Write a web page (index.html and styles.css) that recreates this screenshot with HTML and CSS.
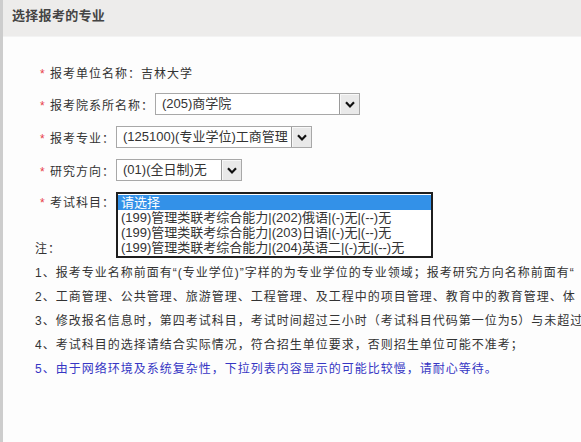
FILE: index.html
```html
<!DOCTYPE html>
<html lang="zh-CN">
<head>
  <meta charset="UTF-8" />
  <title>选择报考的专业</title>
  <link rel="stylesheet" href="styles.css">
</head>
<body>
  <div class="page">
    <div class="panel-head">选择报考的专业</div>

    <div class="panel-body">
      <div class="form">
        <div class="row row-plain">
          <span class="req">*</span>报考单位名称：吉林大学
        </div>

        <div class="row">
          <label><span class="req">*</span>报考院系所名称：</label>
          <div class="select select-dept">
            <span class="select-text">(205)商学院</span>
            <span class="select-btn">
              <svg width="10" height="7" viewBox="0 0 10 7"><path d="M1 1.2 L5 5.4 L9 1.2" fill="none" stroke="#111" stroke-width="2.2"/></svg>
            </span>
          </div>
        </div>

        <div class="row">
          <label><span class="req">*</span>报考专业：</label>
          <div class="select select-major">
            <span class="select-text">(125100)(专业学位)工商管理</span>
            <span class="select-btn">
              <svg width="10" height="7" viewBox="0 0 10 7"><path d="M1 1.2 L5 5.4 L9 1.2" fill="none" stroke="#111" stroke-width="2.2"/></svg>
            </span>
          </div>
        </div>

        <div class="row">
          <label><span class="req">*</span>研究方向：</label>
          <div class="select select-dir">
            <span class="select-text">(01)(全日制)无</span>
            <span class="select-btn">
              <svg width="10" height="7" viewBox="0 0 10 7"><path d="M1 1.2 L5 5.4 L9 1.2" fill="none" stroke="#111" stroke-width="2.2"/></svg>
            </span>
          </div>
        </div>

        <div class="row row-subject">
          <div class="label-col">
            <label><span class="req">*</span>考试科目：</label>
            <span class="note-title">注：</span>
          </div>
          <div class="listbox">
            <div class="option selected">请选择</div>
            <div class="option">(199)管理类联考综合能力|(202)俄语|(-)无|(--)无</div>
            <div class="option">(199)管理类联考综合能力|(203)日语|(-)无|(--)无</div>
            <div class="option">(199)管理类联考综合能力|(204)英语二|(-)无|(--)无</div>
          </div>
        </div>
      </div>

      <!-- 注意事项 -->
      <div class="notes">
        <p>1、报考专业名称前面有“(专业学位)”字样的为专业学位的专业领域；报考研究方向名称前面有“</p>
        <p>2、工商管理、公共管理、旅游管理、工程管理、及工程中的项目管理、教育中的教育管理、体</p>
        <p>3、修改报名信息时，第四考试科目，考试时间超过三小时（考试科目代码第一位为5）与未超过</p>
        <p>4、考试科目的选择请结合实际情况，符合招生单位要求，否则招生单位可能不准考；</p>
        <p class="note-blue">5、由于网络环境及系统复杂性，下拉列表内容显示的可能比较慢，请耐心等待。</p>
      </div>
    </div>
  </div>
</body>
</html>
```

FILE: styles.css
```css
html, body {
  margin: 0;
  overflow: hidden;
}
body {
  font-family: "Liberation Sans", "Noto Sans CJK SC", sans-serif;
  background: #fdfdfd;
  color: #333;
}
.page {
  border-left: 3px solid #cdcdcd;
  min-height: 442px;
}
.panel-head {
  height: 36px;
  line-height: 32px;
  padding-left: 9px;
  background: #edeceb;
  border-bottom: 1px solid #f3f3f3;
  font-size: 13px;
  font-weight: bold;
  color: #444;
  letter-spacing: 0.3px;
}
.panel-body {
  padding: 30px 0 0 32px;
}
.form {
  display: flex;
  flex-direction: column;
  gap: 11px;
}
.row {
  display: flex;
  align-items: center;
  height: 22px;
  padding-left: 5px;
  font-size: 12px;
  letter-spacing: 1px;
  white-space: nowrap;
}
.row-plain {
  height: 15px;
  line-height: 15px;
}
.req {
  display: inline-block;
  width: 10px;
  color: #e8404a;
  letter-spacing: 0;
}
.select {
  display: flex;
  height: 22px;
  box-sizing: border-box;
  margin-left: 1px;
  border: 1px solid #a8a8a8;
  background: #fff;
  letter-spacing: 0;
}
.select-text {
  flex: 1;
  padding-left: 6px;
  font-size: 13px;
  line-height: 20px;
  color: #333;
  overflow: hidden;
}
.select-btn {
  width: 19px;
  display: flex;
  align-items: center;
  justify-content: center;
  background: #e9e9e9;
  border-left: 1px solid #9a9a9a;
  box-shadow: inset 1px 1px 0 #f8f8f8;
}
.select-dept {
  width: 205px;
}
.select-major {
  width: 196px;
}
.select-dir {
  width: 126px;
}
.row-subject {
  height: auto;
  align-items: stretch;
  padding-left: 0;
}
.label-col {
  display: flex;
  flex-direction: column;
  justify-content: space-between;
}
.label-col label {
  padding-left: 5px;
  line-height: 22px;
}
.note-title {
  line-height: 18px;
}
.listbox {
  width: 317px;
  height: 66px;
  box-sizing: border-box;
  margin-left: 1px;
  padding: 1px 0;
  border: 2px solid #1e1e1e;
  background: #fff;
  letter-spacing: 0;
}
.option {
  height: 15px;
  line-height: 15px;
  padding-left: 3px;
  font-size: 13px;
  color: #333;
}
.option.selected {
  background: #3391e8;
  color: #fff;
}
.notes {
  margin-top: 3px;
  font-size: 12px;
  letter-spacing: 1px;
}
.notes p {
  margin: 0;
  line-height: 24px;
  white-space: nowrap;
  overflow: hidden;
}
.notes .note-blue {
  color: #3636c4;
}
```
